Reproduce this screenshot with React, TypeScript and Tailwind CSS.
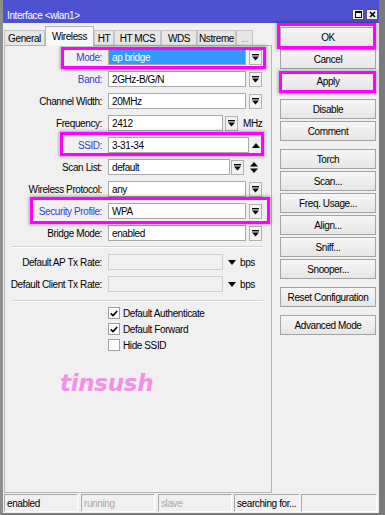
import React from "react";

const Combo = () => (
  <svg width="7" height="7" viewBox="0 0 7 7">
    <rect x="0" y="0" width="7" height="1.4" fill="#000" />
    <path d="M0 2.6H7L3.5 6.6Z" fill="#000" />
  </svg>
);

const DownTri = () => (
  <svg width="8" height="5" viewBox="0 0 8 5">
    <path d="M0 0H8L4 5Z" fill="#000" />
  </svg>
);

const UpTri = () => (
  <svg width="8" height="5" viewBox="0 0 8 5">
    <path d="M0 5H8L4 0Z" fill="#000" />
  </svg>
);

const UpDown = () => (
  <svg width="8" height="11" viewBox="0 0 8 11">
    <path d="M0 4.5H8L4 0Z" fill="#000" />
    <path d="M0 6.5H8L4 11Z" fill="#000" />
  </svg>
);

const DropBtn = () => (
  <div className="w-[13px] h-[15px] shrink-0 border border-[#b0b0b0] bg-[#f2f2f2] flex items-center justify-center">
    <Combo />
  </div>
);

const Input = ({ children, className }: { children?: React.ReactNode; className: string }) => (
  <div className={"h-[16px] border border-[#a9a9a9] bg-white pl-[3px] flex items-center whitespace-nowrap overflow-hidden " + className}>
    {children}
  </div>
);

const Row = ({ label, blue, children }: { label: string; blue?: boolean; children: React.ReactNode }) => (
  <div className="flex items-center h-[18px]">
    <div className={blue ? "w-[97px] text-right whitespace-nowrap text-[#3a3ad8]" : "w-[97px] text-right whitespace-nowrap text-black"}>{label}</div>
    <div className="ml-[6px] w-[155px] flex items-center">{children}</div>
  </div>
);

const Check = ({ checked, label }: { checked?: boolean; label: string }) => (
  <div className="flex items-center h-[16px] pl-[103px]">
    <div className="w-[12px] h-[12px] border border-[#a0a0a0] bg-white flex items-center justify-center">
      {checked && (
        <svg width="8" height="7" viewBox="0 0 8 7">
          <path d="M0.8 3.4L3 5.6L7.2 1" stroke="#000" strokeWidth="1.6" fill="none" />
        </svg>
      )}
    </div>
    <span className="ml-[3px] whitespace-nowrap">{label}</span>
  </div>
);

const Btn = ({ children, className }: { children: React.ReactNode; className?: string }) => (
  <div className={"w-[96px] h-[20px] shrink-0 border border-[#a4a4a4] bg-linear-to-b from-[#f6f6f6] to-[#e6e6e6] flex items-center justify-center whitespace-nowrap text-black " + (className ?? "")}>
    {children}
  </div>
);

const Sep = () => <div className="ml-[7px] w-[251px] h-[2px] border-t border-[#d2d2d2] border-b border-b-white" />;

const Tab = ({ children, w, active, faded }: { children: React.ReactNode; w: string; active?: boolean; faded?: boolean }) => (
  <div
    className={
      active
        ? "h-[20px] border border-[#b5b5b5] border-b-0 bg-[#f7f7f7] flex items-center justify-center relative z-10 " + w
        : "h-[16px] border border-[#c4c4c4] border-b-0 bg-[#e6e6e6] flex items-center justify-center " + w + (faded ? " text-[#9a9a9a]" : "")
    }
  >
    {children}
  </div>
);

const Status = ({ children, className }: { children?: React.ReactNode; className: string }) => (
  <div className={"h-[18px] border-t border-l border-[#a8a8a8] border-r border-b border-r-white border-b-white pl-[2px] flex items-center whitespace-nowrap overflow-hidden " + className}>
    {children}
  </div>
);

export default function App() {
  return (
    <div className="w-[385px] h-[515px] relative overflow-hidden bg-[#f0f0f0] text-[10px] tracking-[-0.4px] text-black font-['Liberation_Sans',Arial,sans-serif]">
      <div className="flex flex-col h-full border-l-[3px] border-l-[#8e8e8e] border-r-[6px] border-r-[#7a7a7a] border-b-[2px] border-b-[#7a7a7a]">
        {/* title bar */}
        <div className="h-[23px] shrink-0 bg-[#4c52d0] flex items-start justify-between pl-[4px] pr-[1px]">
          <div className="text-white pt-[10px] leading-[12px] whitespace-nowrap">Interface &lt;wlan1&gt;</div>
          <div className="flex gap-[2px] pt-[9px]">
            <div className="w-[12px] h-[11px] bg-[#f0f0f0] border border-[#555] flex items-center justify-center">
              <div className="w-[7px] h-[7px] border border-black border-t-2" />
            </div>
            <div className="w-[12px] h-[11px] bg-[#f0f0f0] border border-[#555] flex items-center justify-center">
              <svg width="7" height="7" viewBox="0 0 7 7">
                <path d="M1 1L6 6M6 1L1 6" stroke="#000" strokeWidth="1.6" />
              </svg>
            </div>
          </div>
        </div>

        {/* main */}
        <div className="flex flex-1">
          {/* left */}
          <div className="w-[269px] pt-[3px] pl-[1px] flex flex-col">
            <div className="h-[20px] flex items-end -mb-px">
              <Tab w="w-[41px]">General</Tab>
              <Tab w="w-[49px]" active>Wireless</Tab>
              <Tab w="w-[20px]">HT</Tab>
              <Tab w="w-[47px]">HT MCS</Tab>
              <Tab w="w-[36px]">WDS</Tab>
              <Tab w="w-[39px]">Nstreme</Tab>
              <Tab w="w-[17px]" faded>...</Tab>
            </div>
            <div className="flex-1 border border-[#b5b5b5] flex flex-col pt-[2px]">
              <div className="flex flex-col gap-[4px]">
                <Row label="Mode:" blue>
                  <div className="w-[138px] h-[16px] bg-[#3399ff] text-white pl-[3px] flex items-center border border-[#a9a9a9]">ap bridge</div>
                  <div className="ml-[3px]"><DropBtn /></div>
                </Row>
                <Row label="Band:" blue>
                  <Input className="w-[138px]">2GHz-B/G/N</Input>
                  <div className="ml-[3px]"><DropBtn /></div>
                </Row>
                <Row label="Channel Width:">
                  <Input className="w-[138px]">20MHz</Input>
                  <div className="ml-[3px]"><DropBtn /></div>
                </Row>
                <Row label="Frequency:">
                  <Input className="w-[115px]">2412</Input>
                  <div className="ml-[2px]"><DropBtn /></div>
                  <span className="ml-[5px]">MHz</span>
                </Row>
                <Row label="SSID:" blue>
                  <Input className="w-[141px]">3-31-34</Input>
                  <div className="w-[14px] flex justify-center"><UpTri /></div>
                </Row>
                <Row label="Scan List:">
                  <Input className="w-[122px]">default</Input>
                  <div className="ml-[1px]"><DropBtn /></div>
                  <div className="w-[19px] flex justify-center"><UpDown /></div>
                </Row>
                <Row label="Wireless Protocol:">
                  <Input className="w-[138px]">any</Input>
                  <div className="ml-[3px]"><DropBtn /></div>
                </Row>
                <Row label="Security Profile:" blue>
                  <Input className="w-[138px]">WPA</Input>
                  <div className="ml-[3px]"><DropBtn /></div>
                </Row>
                <Row label="Bridge Mode:">
                  <Input className="w-[138px]">enabled</Input>
                  <div className="ml-[3px]"><DropBtn /></div>
                </Row>
              </div>
              <div className="mt-[4px]"><Sep /></div>
              <div className="mt-[5px] flex flex-col gap-[4px]">
                <Row label="Default AP Tx Rate:">
                  <div className="w-[115px] h-[16px] border border-[#cfcfcf] bg-[#f0f0f0]" />
                  <div className="ml-[5px]"><DownTri /></div>
                  <span className="ml-[4px]">bps</span>
                </Row>
                <Row label="Default Client Tx Rate:">
                  <div className="w-[115px] h-[16px] border border-[#cfcfcf] bg-[#f0f0f0]" />
                  <div className="ml-[5px]"><DownTri /></div>
                  <span className="ml-[4px]">bps</span>
                </Row>
              </div>
              <div className="mt-[7px]"><Sep /></div>
              <div className="mt-[3px] flex flex-col">
                <Check checked label="Default Authenticate" />
                <Check checked label="Default Forward" />
                <Check label="Hide SSID" />
              </div>
              <div className="mt-[17px] pl-[55px] h-[26px] leading-[26px] text-[23px] tracking-[-0.3px] font-bold italic text-[#f291e6] font-['DejaVu_Sans',sans-serif]">
                tinsush
              </div>
            </div>
          </div>

          {/* right */}
          <div className="flex-1 pl-[8px] pt-[4px] flex flex-col">
            <Btn className="border-[#6e6e6e]">OK</Btn>
            <div className="mt-[2px]"><Btn>Cancel</Btn></div>
            <div className="mt-[2px]"><Btn>Apply</Btn></div>
            <div className="mt-[8px]"><Btn>Disable</Btn></div>
            <div className="mt-[2px]"><Btn>Comment</Btn></div>
            <div className="mt-[8px]"><Btn>Torch</Btn></div>
            <div className="mt-[2px]"><Btn>Scan...</Btn></div>
            <div className="mt-[2px]"><Btn>Freq. Usage...</Btn></div>
            <div className="mt-[2px]"><Btn>Align...</Btn></div>
            <div className="mt-[2px]"><Btn>Sniff...</Btn></div>
            <div className="mt-[2px]"><Btn>Snooper...</Btn></div>
            <div className="mt-[8px]"><Btn>Reset Configuration</Btn></div>
            <div className="mt-[8px]"><Btn>Advanced Mode</Btn></div>
          </div>
        </div>

        {/* status bar */}
        <div className="h-[20px] shrink-0 flex items-center pl-[1px]">
          <Status className="w-[74px]">enabled</Status>
          <Status className="w-[74px] ml-[3px] text-[#a8a8a8]">running</Status>
          <Status className="w-[74px] ml-[3px] text-[#a8a8a8]">slave</Status>
          <Status className="w-[66px] ml-[2px]">searching for...</Status>
          <Status className="w-[76px] ml-[1px]" />
        </div>
      </div>

      {/* magenta highlight overlays */}
      <div className="absolute left-[61px] top-[47px] w-[205px] h-[22px] border-[3px] border-[#ff00ff] shadow-[0_0_3px_1px_rgba(0,0,0,0.3)] pointer-events-none" />
      <div className="absolute left-[60px] top-[132px] w-[204px] h-[24px] border-[3px] border-[#ff00ff] shadow-[0_0_3px_1px_rgba(0,0,0,0.3)] pointer-events-none" />
      <div className="absolute left-[30px] top-[197px] w-[240px] h-[27px] border-[3px] border-[#ff00ff] shadow-[0_0_3px_1px_rgba(0,0,0,0.3)] pointer-events-none" />
      <div className="absolute left-[277px] top-[23px] w-[99px] h-[26px] border-[3px] border-[#ff00ff] shadow-[0_0_3px_1px_rgba(0,0,0,0.3)] pointer-events-none" />
      <div className="absolute left-[279px] top-[71px] w-[97px] h-[22px] border-[3px] border-[#ff00ff] shadow-[0_0_3px_1px_rgba(0,0,0,0.3)] pointer-events-none" />
    </div>
  );
}
